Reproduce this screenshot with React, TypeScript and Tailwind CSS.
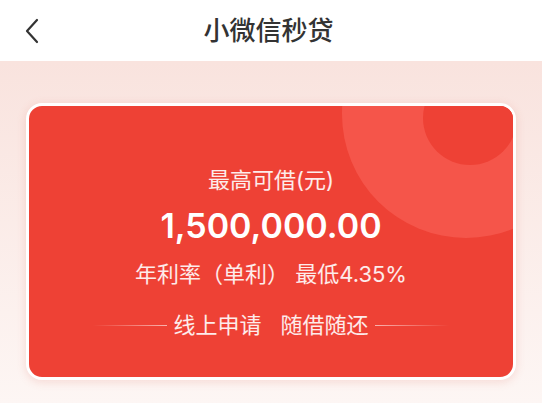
export default function App() {
  return (
    <main
      className="w-[542px] h-[403px] overflow-hidden flex flex-col"
      style={{ fontFamily: '"Inter", "Noto Sans CJK SC", sans-serif' }}
    >
      {/* header */}
      <header className="h-[61px] bg-white relative flex items-center justify-center">
        <button className="absolute left-[22px] top-[17px] w-[20px] h-[28px] flex items-center justify-center">
          <svg width="16" height="26" viewBox="0 0 16 26" fill="none">
            <path
              d="M13 2 L3 13 L13 24"
              stroke="#333333"
              strokeWidth="2.2"
              strokeLinecap="round"
              strokeLinejoin="round"
            />
          </svg>
        </button>
        <h1 className="text-[26px] font-medium text-[#333333] leading-none mt-[1px] ml-[-5px]">
          小微信秒贷
        </h1>
      </header>

      {/* body */}
      <section className="flex-1 bg-gradient-to-b from-[#f9e3de] to-[#fdf6f4] px-[26px] pt-[42px]">
        <div className="relative overflow-hidden rounded-[16px] border-[3px] border-white bg-[#ee4135] shadow-[0_2px_10px_rgba(214,90,70,0.18)] pt-[60px] pb-[38px] flex flex-col items-center text-white">
          <div className="absolute left-[313px] top-[-116px] w-[248px] h-[248px] rounded-full bg-[#f5554a]" />
          <div className="absolute left-[394px] top-[-35px] w-[94px] h-[94px] rounded-full bg-[#ee4135]" />

          <p className="relative text-[22px] leading-[28px] text-white/90">最高可借(元)</p>
          <p className="relative mt-[10px] text-[34px] leading-[44px] font-semibold">
            1,500,000.00
          </p>
          <p className="relative mt-[12px] text-[22px] leading-[28px] text-white/90">
            年利率（单利） 最低4.35%
          </p>
          <div className="relative mt-[23px] flex items-center">
            <span className="w-[74px] h-px bg-gradient-to-r from-transparent to-white/60" />
            <span className="ml-[6px] text-[22px] leading-[28px] text-white/90">线上申请</span>
            <span className="ml-[19px] mr-[6px] text-[22px] leading-[28px] text-white/90">随借随还</span>
            <span className="w-[74px] h-px bg-gradient-to-l from-transparent to-white/60" />
          </div>
        </div>
      </section>
    </main>
  );
}
